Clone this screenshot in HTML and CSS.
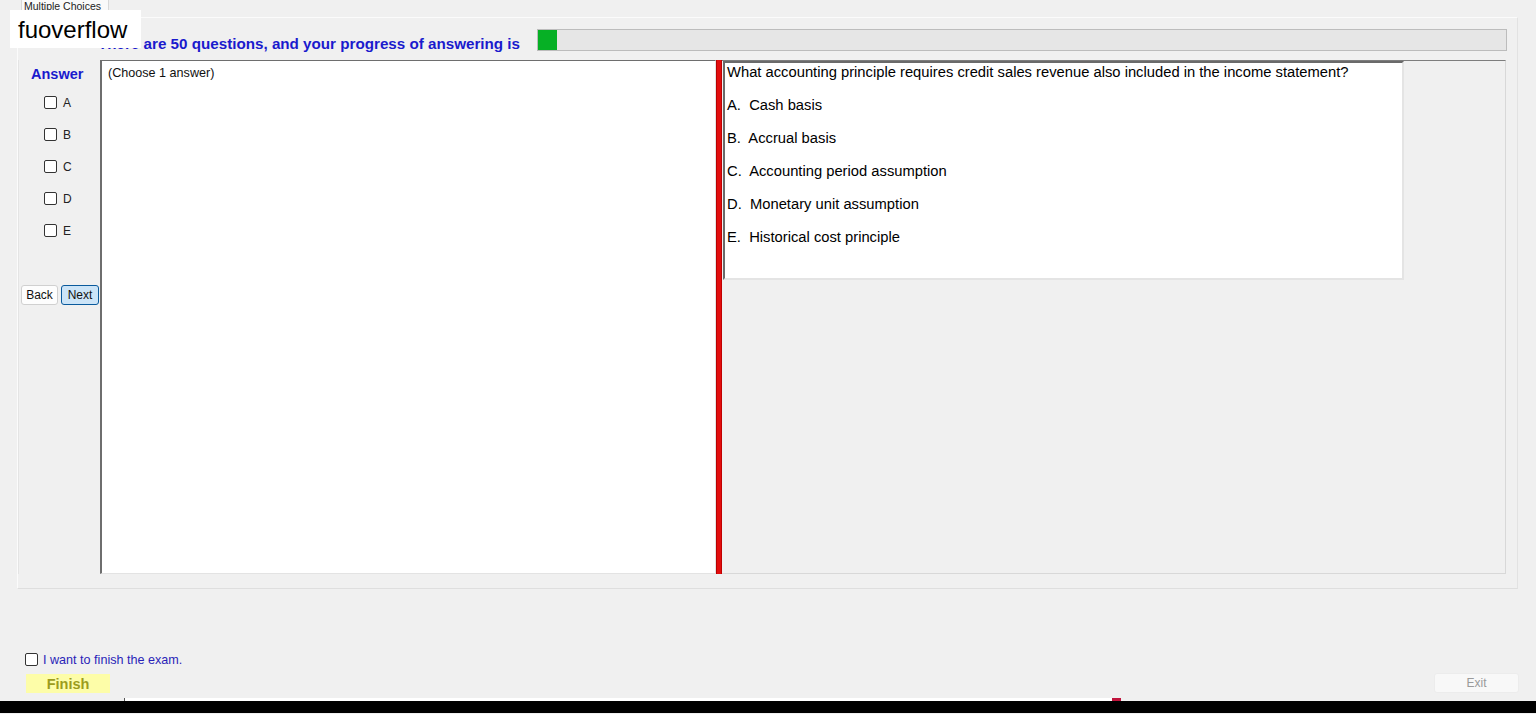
FILE: index.html
```html
<!DOCTYPE html>
<html lang="en">
<head>
<meta charset="utf-8">
<title>Multiple Choices</title>
<link rel="stylesheet" href="styles.css">
</head>
<body>
<div class="window">
  <div class="tabstrip">
    <div class="tab"><span class="tab-label">Multiple Choices</span></div>
  </div>
  <div class="tabpage">
    <div class="header-row">
      <div class="heading">There are 50 questions, and your progress of answering is</div>
      <div class="progress"><div class="progress-fill" style="width:19px"></div></div>
    </div>
    <div class="main-row">
      <div class="sidebar">
        <div class="answer-title">Answer</div>
        <div class="choices">
          <label class="choice"><span class="box"></span><span class="choice-label">A</span></label>
          <label class="choice"><span class="box"></span><span class="choice-label">B</span></label>
          <label class="choice"><span class="box"></span><span class="choice-label">C</span></label>
          <label class="choice"><span class="box"></span><span class="choice-label">D</span></label>
          <label class="choice"><span class="box"></span><span class="choice-label">E</span></label>
        </div>
        <div class="nav-buttons">
          <button class="btn btn-back">Back</button>
          <button class="btn btn-next">Next</button>
        </div>
      </div>
      <div class="answer-box">(Choose 1 answer)</div>
      <div class="splitter"></div>
      <div class="question-panel">
        <div class="question-box">
          <div class="question-text">What accounting principle requires credit sales revenue also included in the income statement?</div>
          <div class="options">
            <div class="option">A.  Cash basis</div>
            <div class="option">B.  Accrual basis</div>
            <div class="option">C.  Accounting period assumption</div>
            <div class="option">D.  Monetary unit assumption</div>
            <div class="option">E.  Historical cost principle</div>
          </div>
        </div>
      </div>
    </div>
  </div>
  <div class="footer">
    <label class="finish-check"><span class="box"></span><span class="finish-label">I want to finish the exam.</span></label>
    <div class="footer-buttons">
      <button class="btn-finish">Finish</button>
      <button class="btn-exit">Exit</button>
    </div>
  </div>
  <div class="scrollstrip">
    <div class="strip-gap"></div>
    <div class="strip-white"></div>
    <div class="strip-red"></div>
  </div>
  <div class="blackbar"></div>
  <div class="watermark">fuoverflow</div>
</div>
</body>
</html>
```

FILE: styles.css
```css
* { box-sizing: border-box; }
html, body {
  margin: 0;
  padding: 0;
  background: #f0f0f0;
}
body {
  font-family: "Liberation Sans", Arial, sans-serif;
  width: 1536px;
  height: 714px;
  overflow: hidden;
}
.window {
  position: relative;
  width: 1536px;
  height: 714px;
}

/* tab strip */
.tabstrip {
  height: 17px;
  padding-left: 21px;
  display: flex;
  overflow: hidden;
}
.tab {
  width: 88px;
  height: 17px;
  background: #fafafa;
  border: 1px solid #d9d9d9;
  border-top: none;
  border-bottom: none;
  font-size: 10.5px;
  color: #222;
  overflow: hidden;
}
.tab-label {
  display: block;
  margin-top: 0;
  padding-left: 2px;
  line-height: 13px;
  white-space: nowrap;
}

/* tab page */
.tabpage {
  margin-left: 17px;
  width: 1501px;
  height: 572px;
  border: 1px solid #fbfbfb;
  border-right-color: #e2e2e2;
  border-bottom-color: #dedede;
  padding: 11px 10px 14px 0;
}
.header-row {
  display: flex;
  height: 22px;
}
.heading {
  width: 519px;
  padding-left: 80px;
  margin-top: 7px;
  font-size: 15.2px;
  line-height: 16px;
  font-weight: bold;
  color: #1a1acd;
  white-space: nowrap;
}
.progress {
  flex: 1;
  height: 22px;
  background: #e6e6e6;
  border: 1px solid #bcbcbc;
}
.progress-fill {
  height: 100%;
  background: #06b025;
}

.main-row {
  margin-top: 9px;
  height: 514px;
  display: flex;
}
.sidebar {
  width: 82px;
  padding-top: 6px;
  border-left: 1px solid #e4e4e4;
}
.answer-title {
  padding-left: 12px;
  font-size: 14.5px;
  line-height: 16px;
  font-weight: bold;
  color: #1a1acd;
}
.choices {
  margin-top: 14px;
  display: flex;
  flex-direction: column;
  gap: 19px;
  padding-left: 25px;
}
.choice {
  display: flex;
  align-items: center;
  height: 13px;
  gap: 6px;
}
.box {
  display: inline-block;
  width: 13px;
  height: 13px;
  border: 1px solid #333;
  border-radius: 2px;
  background: #fff;
  flex: none;
}
.choice-label {
  font-size: 12px;
  color: #222;
}
.nav-buttons {
  margin-top: 48px;
  display: flex;
  gap: 3px;
  padding-left: 2px;
}
.btn {
  height: 20px;
  padding: 0;
  font-family: "Liberation Sans", Arial, sans-serif;
  font-size: 12px;
  color: #111;
  border-radius: 3px;
}
.btn-back {
  width: 37px;
  background: #fdfdfd;
  border: 1px solid #d0d0d0;
}
.btn-next {
  width: 38px;
  background: #cce4f7;
  border: 1px solid #0a5a9c;
}

.answer-box {
  width: 616px;
  height: 514px;
  background: #fff;
  border: 1px solid #e3e3e3;
  border-top: 1px solid #6e6e6e;
  border-left: 2px solid #6e6e6e;
  padding: 5px 6px;
  font-size: 12.6px;
  line-height: 15px;
  color: #111;
}
.splitter {
  width: 6px;
  height: 514px;
  background: #e20d0d;
  border-left: 1px solid #b80000;
  border-right: 1px solid #c00000;
}
.question-panel {
  width: 784px;
  height: 514px;
  border-top: 1px solid #7d7d7d;
  border-right: 1px solid #d8d8d8;
  border-bottom: 1px solid #d8d8d8;
}
.question-box {
  margin-left: 1px;
  width: 681px;
  height: 219px;
  background: #fff;
  border: 2px solid #e4e4e4;
  border-top-color: #6a6a6a;
  border-left-color: #6a6a6a;
  padding: 1px 2px 0 2px;
  color: #000;
  font-size: 14.75px;
}
.question-text {
  line-height: 17px;
  white-space: nowrap;
}
.options {
  padding-top: 8px;
}
.option {
  line-height: 33px;
  white-space: pre;
}

/* footer */
.footer {
  padding-top: 64px;
  padding-left: 25px;
}
.finish-check {
  display: flex;
  align-items: center;
  height: 13px;
  gap: 5px;
}
.finish-label {
  font-size: 12.6px;
  color: #2a1fb8;
}
.footer-buttons {
  margin-top: 7px;
  display: flex;
  justify-content: space-between;
  align-items: flex-start;
  padding-right: 17px;
}
.btn-finish {
  margin-left: 1px;
  margin-top: 1px;
  width: 84px;
  height: 19px;
  border: none;
  background: #fdfda8;
  color: #9c9c1c;
  font-family: "Liberation Sans", Arial, sans-serif;
  font-size: 14.5px;
  font-weight: bold;
  padding: 0;
}
.btn-exit {
  width: 85px;
  height: 20px;
  background: #f8f8f8;
  border: 1px solid #ececec;
  border-radius: 3px;
  color: #9a9a9a;
  font-family: "Liberation Sans", Arial, sans-serif;
  font-size: 12px;
  padding: 0;
}

.scrollstrip {
  margin-top: 5px;
  height: 3px;
  display: flex;
}
.strip-gap {
  width: 125px;
  border-right: 1px solid #555;
}
.strip-white {
  width: 987px;
  background: #fff;
}
.strip-red {
  width: 9px;
  background: #c0143c;
}
.blackbar {
  height: 12px;
  background: #000;
}

.watermark {
  position: absolute;
  left: 10px;
  top: 10px;
  width: 131px;
  height: 38px;
  background: #fff;
  padding: 1px 0 0 8px;
  font-size: 24px;
  line-height: 37px;
  color: #000;
}
```
